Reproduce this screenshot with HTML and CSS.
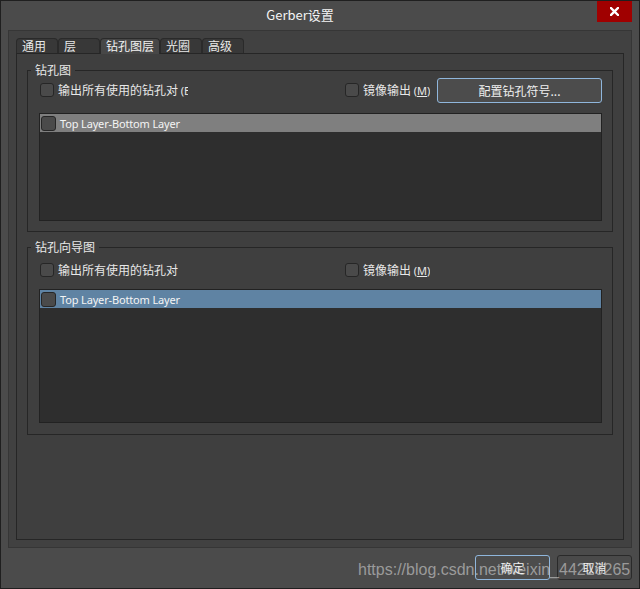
FILE: index.html
```html
<!DOCTYPE html>
<html lang="zh-CN">
<head>
<meta charset="utf-8">
<title>Gerber设置</title>
<link rel="stylesheet" href="styles.css">
</head>
<body>
<div class="window">
  <div class="titlebar">
    <div class="title">Gerber设置</div>
    <button class="close" aria-label="关闭">
      <svg width="9" height="9" viewBox="0 0 9 9"><path d="M1 1L8 8M8 1L1 8" stroke="#fff" stroke-width="2.4" stroke-linecap="square"/></svg>
    </button>
  </div>
  <div class="frame">
    <div class="tabs">
      <div class="tab">通用</div>
      <div class="tab">层</div>
      <div class="tab active">钻孔图层</div>
      <div class="tab">光圈</div>
      <div class="tab">高级</div>
    </div>
    <div class="page">
      <div class="group g1">
        <div class="group-title">钻孔图</div>
        <div class="row">
          <label class="check c-all"><span class="box"></span><span class="lbl">输出所有使用的钻孔对 <span class="lat">(E)</span></span></label>
          <label class="check c-mirror"><span class="box"></span><span class="lbl">镜像输出 <span class="lat">(<u>M</u>)</span></span></label>
          <button class="btn focus cfg">配置钻孔符号...</button>
        </div>
        <div class="list l1">
          <div class="item gray"><span class="box ibox"></span><span class="lat item-text">Top Layer-Bottom Layer</span></div>
        </div>
      </div>
      <div class="group g2">
        <div class="group-title">钻孔向导图</div>
        <div class="row">
          <label class="check c-all"><span class="box"></span><span class="lbl">输出所有使用的钻孔对</span></label>
          <label class="check c-mirror"><span class="box"></span><span class="lbl">镜像输出 <span class="lat">(<u>M</u>)</span></span></label>
        </div>
        <div class="list l2">
          <div class="item blue"><span class="box ibox"></span><span class="lat item-text">Top Layer-Bottom Layer</span></div>
        </div>
      </div>
    </div>
  </div>
  <div class="footer">
    <button class="btn focus fbtn">确定</button>
    <button class="btn fbtn">取消</button>
  </div>
  <div class="watermark">https://blog.csdn.net/weixin_44216265</div>
</div>
</body>
</html>
```

FILE: styles.css
```css
* { box-sizing: border-box; }
html, body { margin: 0; padding: 0; }
body {
  width: 640px;
  height: 589px;
  background: #4b4b4b;
  font-family: "Noto Sans CJK SC", "Noto Sans", sans-serif;
  font-size: 12px;
  color: #e8e8e8;
  overflow: hidden;
}
.window {
  position: relative;
  width: 640px;
  height: 589px;
  border: 1px solid #1f1f1f;
  background: #4b4b4b;
  display: flex;
  flex-direction: column;
}
.titlebar {
  height: 29px;
  display: flex;
  align-items: flex-start;
  flex: 0 0 auto;
}
.title {
  flex: 1;
  text-align: center;
  font-size: 13px;
  line-height: 28px;
  color: #f4f4f4;
  padding-left: 2px;
}
.close {
  width: 35px;
  height: 21px;
  margin: 0 7px 0 0;
  padding: 0;
  border: 0;
  background: #a00000;
  display: flex;
  align-items: center;
  justify-content: center;
}
.close svg { display: block; }

.frame {
  width: 624px;
  height: 518px;
  margin-left: 7px;
  border: 1px solid #363636;
  background: #414141;
  padding: 7px 7px 7px 7px;
  display: flex;
  flex-direction: column;
}
.tabs {
  display: flex;
  height: 15px;
  flex: 0 0 auto;
  position: relative;
  z-index: 1;
}
.tab {
  width: 42px;
  height: 15px;
  border: 1px solid #2a2a2a;
  border-bottom: 0;
  border-radius: 4px 4px 0 0;
  background: #383838;
  padding-left: 5px;
  line-height: 14px;
  font-size: 12px;
  color: #e8e8e8;
  white-space: nowrap;
}
.tab.active {
  width: 60px;
  height: 16px;
  background: #474747;
  color: #f2f2f2;
}
.page {
  width: 608px;
  height: 487px;
  border: 1px solid #262626;
  background: #3f3f3f;
}
.group {
  margin: 16px 10px 0 10px;
  border: 1px solid #262626;
  padding: 0 10px 10px 11px;
}
.g2 { margin-top: 15px; padding-bottom: 11px; }
.group-title {
  width: max-content;
  height: 16px;
  line-height: 16px;
  margin: -9px 0 0 -8px;
  padding: 0 4px;
  background: #3f3f3f;
  color: #e8e8e8;
}
.row {
  display: flex;
  align-items: center;
  height: 24px;
}
.g2 .row { margin-top: 3px; }
.check {
  display: flex;
  align-items: center;
  white-space: nowrap;
  overflow: hidden;
  line-height: 16px;
}
.c-all { flex: 0 0 148px; margin-left: 1px; }
.c-mirror { margin-left: 157px; }
.box {
  flex: 0 0 auto;
  width: 14px;
  height: 14px;
  border: 1px solid #262626;
  border-radius: 3px;
  background: #4a4a4a;
  margin-right: 4px;
}
.lbl { color: #e8e8e8; }
.lat {
  font-family: "Noto Sans", "Noto Sans CJK SC", sans-serif;
  font-size: 11px;
}
.item-text { letter-spacing: -0.15px; }
.btn {
  font-family: "Noto Sans CJK SC", "Noto Sans", sans-serif;
  font-size: 12px;
  color: #f0f0f0;
  background: #4a4a4a;
  border: 1px solid #2a2a2a;
  border-radius: 3px;
  padding: 0;
  height: 25px;
  line-height: 21px;
}
.btn.focus { border-color: #8fb6dc; background: #4c4c4c; }
.cfg { width: 165px; margin-left: auto; }
.list {
  border: 1px solid #222;
  background: #2e2e2e;
}
.l1 { margin-top: 11px; height: 108px; }
.l2 { margin-top: 7px; height: 134px; }
.item {
  height: 18px;
  display: flex;
  align-items: center;
  padding-left: 1px;
  color: #f4f4f4;
  white-space: nowrap;
}
.item.gray { background: #7f7f7f; }
.item.blue { background: #5f83a3; }
.ibox { width: 15px; height: 15px; }

.footer {
  flex: 1;
  display: flex;
  justify-content: flex-end;
  gap: 7px;
  padding: 7px 7px 0 0;
}
.fbtn { width: 75px; height: 25px; }

.watermark {
  position: absolute;
  left: 357px;
  top: 560px;
  font-family: "Liberation Sans", Arial, sans-serif;
  font-size: 16px;
  line-height: 18px;
  color: rgba(210, 210, 210, 0.6);
  white-space: nowrap;
  pointer-events: none;
}
```
